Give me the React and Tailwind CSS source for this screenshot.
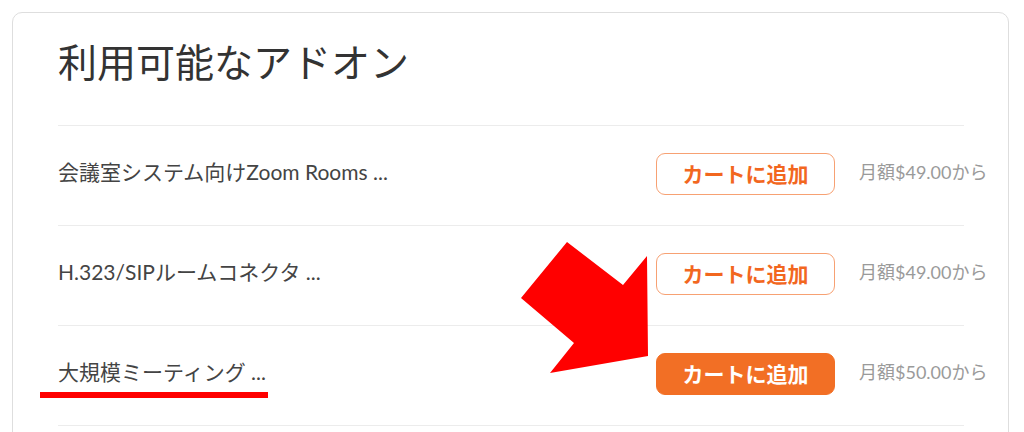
import React from 'react';

const addons = [
    { name: '会議室システム向けZoom Rooms ...', price: '月額$49.00から', primary: false },
    { name: 'H.323/SIPルームコネクタ ...', price: '月額$49.00から', primary: false },
    { name: '大規模ミーティング ...', price: '月額$50.00から', primary: true },
];

export default function App() {
    return (
        <div className="relative w-[1024px] h-[432px] overflow-hidden bg-white font-['Lato','Noto_Sans_CJK_JP',sans-serif]">
            <div className="ml-[12px] mt-[12px] w-[997px] h-[460px] border border-[#dedede] rounded-[10px]">
                <h1 className="h-[112px] pt-[29px] pl-[45px] text-[39px] leading-[40px] text-[#333] font-normal">
                    利用可能なアドオン
                </h1>
                <div className="h-px bg-[#ececec] ml-[45px] mr-[44px]" />

                {addons.map((item) => (
                    <div key={item.name}>
                        <div className="flex items-center h-[99px] pl-[45px] pb-[3px]">
                            <div className="flex-1 pb-[6px] text-[21px] text-[#444] leading-none">{item.name}</div>
                            <button
                                className={
                                    item.primary
                                        ? 'w-[179px] h-[42px] rounded-[9px] bg-[#f26f25] border border-[#f26f25] text-white text-[21px] font-bold'
                                        : 'w-[179px] h-[42px] rounded-[9px] bg-white border border-[#f7a173] text-[#f2671f] text-[21px] font-bold'
                                }
                            >
                                カートに追加
                            </button>
                            <div className="ml-[24px] w-[149px] pb-[4px] text-[18px] text-[#9a9a9a]">{item.price}</div>
                        </div>
                        <div className="h-px bg-[#ececec] ml-[45px] mr-[44px]" />
                    </div>
                ))}
            </div>

            {/* red annotation: underline + arrow */}
            <div className="absolute left-[40px] top-[392px] w-[228px] h-[6px] bg-[#ff0000]" />
            <svg className="absolute left-0 top-0 pointer-events-none" width="1024" height="432">
                <polygon
                    fill="#ff0000"
                    points="567,242 623,285 647,256 648,356 550,373 574,343 521,298"
                />
            </svg>
        </div>
    );
}
